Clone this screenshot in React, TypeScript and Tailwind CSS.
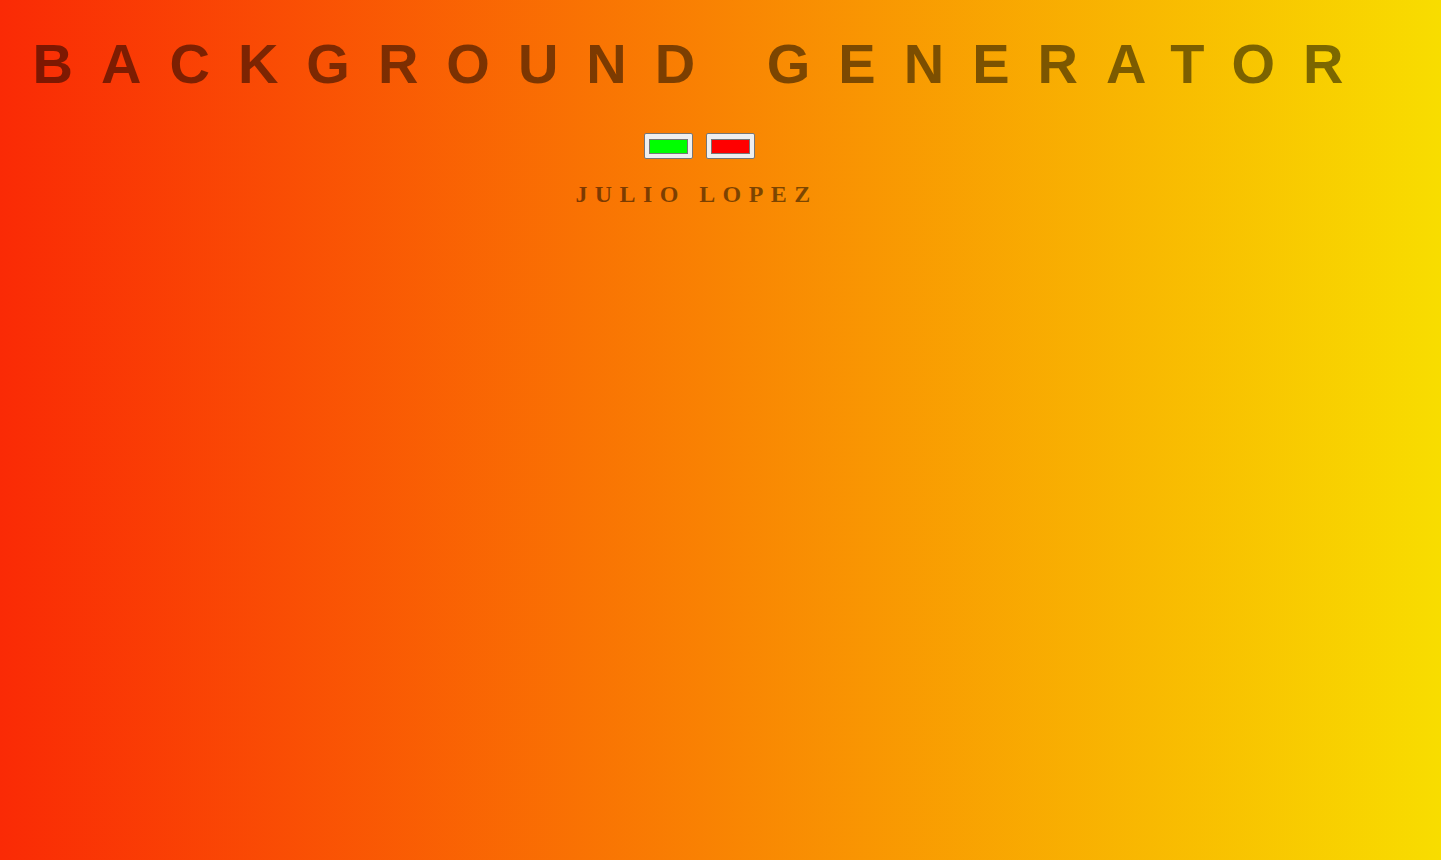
import React from "react";

function ColorSwatch({ color }: { color: string }) {
  return (
    <div className="flex h-[26px] w-[49px] items-center justify-center rounded-[2px] border border-[#767676] bg-[#efefef]">
      <div className={`h-[15px] w-[39px] border border-[#777777] ${color}`} />
    </div>
  );
}

export default function App() {
  return (
    <div className="min-h-[860px] w-full bg-[linear-gradient(to_right,#fa2a05,#f8dd00)]">
      <div className="flex w-[1400px] flex-col items-center text-center">
        <h1 className="mt-[36px] whitespace-nowrap pl-[4px] text-[56px] font-bold leading-[56px] tracking-[0.5em] text-[rgba(0,0,0,0.5)] [font-family:'Liberation_Sans',Arial,sans-serif]">
          BACKGROUND GENERATOR
        </h1>
        <div className="mt-[41px] flex gap-[13px] pr-[2px]">
          <ColorSwatch color="bg-[#00ff00]" />
          <ColorSwatch color="bg-[#ff0000]" />
        </div>
        <h3 className="mt-[21px] whitespace-nowrap pr-[7px] text-[24px] font-bold leading-[28px] tracking-[7.4px] text-[rgba(0,0,0,0.5)] [font-family:'Liberation_Serif','Times_New_Roman',serif]">
          JULIO LOPEZ
        </h3>
      </div>
    </div>
  );
}
